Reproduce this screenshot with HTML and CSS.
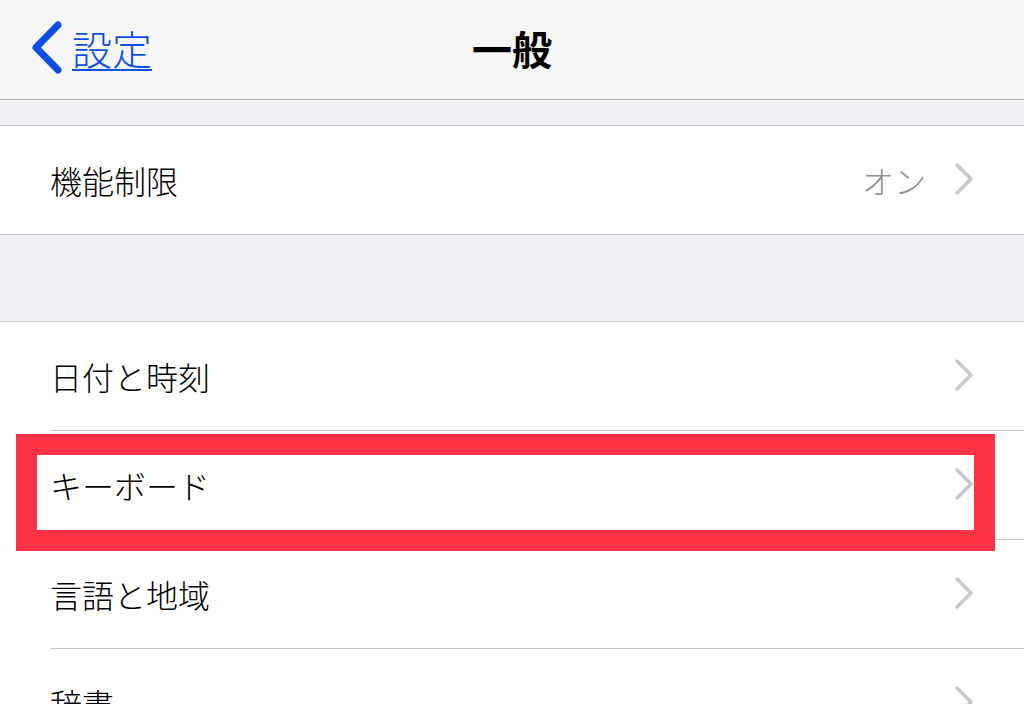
FILE: index.html
```html
<!DOCTYPE html>
<html lang="ja">
<head>
    <meta charset="UTF-8">
    <meta name="viewport" content="width=device-width, initial-scale=1.0">
    <title>一般</title>
    <link rel="stylesheet" href="styles.css">
</head>
<body>
    <header class="nav-bar">
        <a href="#" class="back-link">
            <svg class="back-chevron" width="34" height="56" viewBox="0 0 34 56">
                <path d="M28 5 L6 27.5 L28 50" fill="none" stroke="#0c4fe4" stroke-width="7" stroke-linecap="round" stroke-linejoin="round"/>
            </svg>
            <span class="back-text">設定</span>
        </a>
        <h1 class="nav-title">一般</h1>
        <div></div>
    </header>

    <div class="gap gap-small"></div>

    <!-- Restrictions -->
    <div class="group">
        <div class="cell">
            <span class="cell-label">機能制限</span>
            <span class="cell-value">オン</span>
            <svg class="chevron" width="20" height="32" viewBox="0 0 20 32">
                <path d="M3 2 L17 16 L3 30" fill="none" stroke="#c7c7cc" stroke-width="3.5" stroke-linecap="round" stroke-linejoin="round"/>
            </svg>
        </div>
    </div>

    <div class="gap gap-large"></div>

    <!-- Date, keyboard, language -->
    <div class="group">
        <div class="cell">
            <span class="cell-label">日付と時刻</span>
            <svg class="chevron" width="20" height="32" viewBox="0 0 20 32">
                <path d="M3 2 L17 16 L3 30" fill="none" stroke="#c7c7cc" stroke-width="3.5" stroke-linecap="round" stroke-linejoin="round"/>
            </svg>
        </div>
        <div class="cell highlighted">
            <span class="cell-label">キーボード</span>
            <svg class="chevron" width="20" height="32" viewBox="0 0 20 32">
                <path d="M3 2 L17 16 L3 30" fill="none" stroke="#c7c7cc" stroke-width="3.5" stroke-linecap="round" stroke-linejoin="round"/>
            </svg>
            <div class="highlight-box"></div>
        </div>
        <div class="cell">
            <span class="cell-label">言語と地域</span>
            <svg class="chevron" width="20" height="32" viewBox="0 0 20 32">
                <path d="M3 2 L17 16 L3 30" fill="none" stroke="#c7c7cc" stroke-width="3.5" stroke-linecap="round" stroke-linejoin="round"/>
            </svg>
        </div>
        <div class="cell">
            <span class="cell-label">辞書</span>
            <svg class="chevron" width="20" height="32" viewBox="0 0 20 32">
                <path d="M3 2 L17 16 L3 30" fill="none" stroke="#c7c7cc" stroke-width="3.5" stroke-linecap="round" stroke-linejoin="round"/>
            </svg>
        </div>
    </div>
</body>
</html>
```

FILE: styles.css
```css
body {
    font-family: "Noto Sans CJK JP", "Noto Sans", sans-serif;
    margin: 0;
    padding: 0;
    height: 704px;
    overflow: hidden;
    background: #efeff4;
    color: #000;
}

.nav-bar {
    height: 100px;
    box-sizing: border-box;
    background: #f7f7f7;
    border-bottom: 1px solid #b2b2b2;
    display: grid;
    grid-template-columns: 1fr auto 1fr;
    align-items: center;
    padding-bottom: 4px;
}

.back-link {
    display: flex;
    align-items: center;
    gap: 8px;
    padding-left: 30px;
    color: #0c4fe4;
    text-decoration: none;
}

.back-chevron {
    display: block;
}

.back-text {
    font-size: 40px;
    font-weight: 300;
    line-height: 1;
    text-decoration: underline;
    text-decoration-thickness: 2px;
    text-underline-offset: 4px;
}

.nav-title {
    margin: 0;
    font-size: 40px;
    font-weight: 700;
    color: #000;
    line-height: 1;
}

.gap-small {
    height: 25px;
}

.gap-large {
    height: 86px;
}

.group {
    background: #fff;
    border-top: 1px solid #c8c7cc;
    border-bottom: 1px solid #c8c7cc;
}

.cell {
    position: relative;
    height: 108px;
    margin-left: 50px;
    padding-right: 50px;
    display: flex;
    align-items: center;
    border-bottom: 1px solid #c8c7cc;
}

.cell:last-child {
    border-bottom: none;
}

.group:first-of-type .cell {
    height: 107px;
}

.cell-label {
    flex: 1;
    font-size: 32px;
    font-weight: 300;
    line-height: 1;
}

.cell-value {
    font-size: 32px;
    font-weight: 300;
    line-height: 1;
    color: #8e8e93;
    margin-right: 28px;
}

.chevron {
    display: block;
    margin-top: -2px;
}

.highlight-box {
    position: absolute;
    top: 3px;
    left: -34px;
    width: 979px;
    height: 117px;
    box-sizing: border-box;
    border: 21px solid #ff3347;
    z-index: 2;
}
```
